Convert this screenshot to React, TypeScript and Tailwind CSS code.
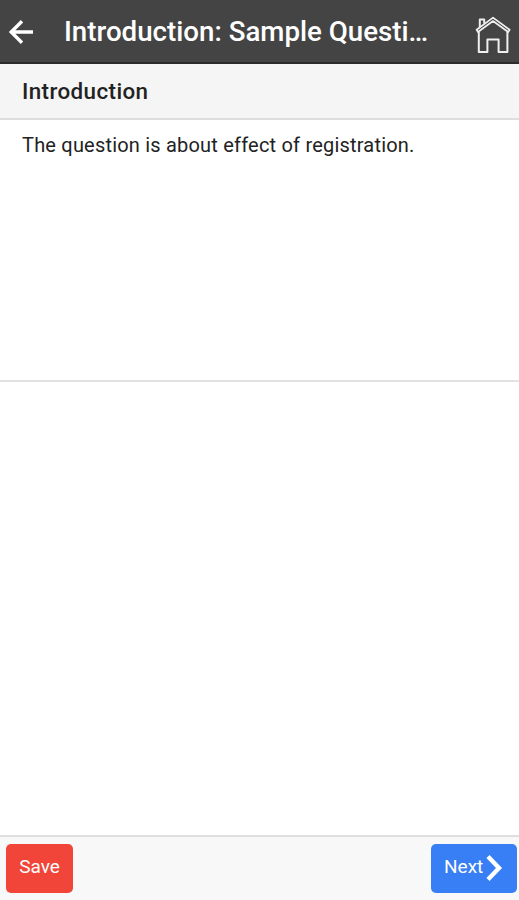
import React from 'react';

interface ActionButtonProps {
    label: string;
    className: string;
    children?: React.ReactNode;
}

const BackIcon: React.FC = () => (
    <svg width="26" height="26" viewBox="0 0 26 26" fill="none" stroke="#fff" strokeWidth="3.4">
        <path d="M25 13H3.5M14 2.2L3.2 13L14 23.8" />
    </svg>
);

const HomeIcon: React.FC = () => (
    <svg width="36" height="38" viewBox="0 0 36 38" fill="none" stroke="#f0f0f0" strokeWidth="2" strokeLinejoin="round">
        <path d="M4.8 11.4V3.6H9.2V7.4" />
        <path d="M1.6 13.8L18 1.6L34.6 13.8L33.2 16L18 5L3 16Z" strokeWidth="1.7" />
        <path d="M3.8 16V36H12.4V23.6H23.6V36H32.4V16" />
    </svg>
);

const ActionButton: React.FC<ActionButtonProps> = ({ label, className, children }) => (
    <button type="button" className={`flex h-[49px] items-center rounded-[5px] text-[19px] text-white ${className}`}>
        <span className="-mt-0.5">{label}</span>
        {children}
    </button>
);

export default function App() {
    return (
        <div className="flex h-screen w-full flex-col overflow-hidden bg-white font-['Roboto',sans-serif] text-[#222]">
            {/* Toolbar */}
            <header className="flex h-16 shrink-0 items-center border-b-2 border-[#2b2b2b] bg-[#444] pr-2 pl-2">
                <button type="button" aria-label="Back" className="mt-0.5 shrink-0">
                    <BackIcon />
                </button>
                <h1 className="mt-0.5 ml-[30px] flex-1 whitespace-nowrap text-[27.7px] leading-8 font-medium text-white">
                    Introduction: Sample Questi…
                </h1>
                <button type="button" aria-label="Home" className="mt-2 shrink-0">
                    <HomeIcon />
                </button>
            </header>

            {/* Question */}
            <section className="flex h-[318px] shrink-0 flex-col border-b-2 border-[#e2e2e2]">
                <h2 className="h-14 shrink-0 border-b-2 border-[#dedede] bg-[#f5f5f5] pl-[22px] text-[22.4px] leading-[55px] font-medium tracking-[0.4px]">
                    Introduction
                </h2>
                <p className="pt-3 pl-[22px] text-[20px] leading-[26px] tracking-[0.2px]">The question is about effect of registration.</p>
            </section>

            <main className="flex-1" />

            {/* Footer */}
            <footer className="flex h-[65px] shrink-0 items-start justify-between border-t-2 border-[#dedede] bg-[#f8f8f8] pt-[7px] pr-[2px] pl-1.5">
                <ActionButton label="Save" className="w-[67px] justify-center bg-[#f04538]" />
                <ActionButton label="Next" className="w-[86px] bg-[#387ef5] pl-[13px]">
                    <svg width="18" height="28" viewBox="0 0 18 28" fill="none" stroke="#fff" strokeWidth="4.4" className="-mt-0.5 ml-0.5">
                        <path d="M3 2.5L14 14L3 25.5" />
                    </svg>
                </ActionButton>
            </footer>
        </div>
    );
}
